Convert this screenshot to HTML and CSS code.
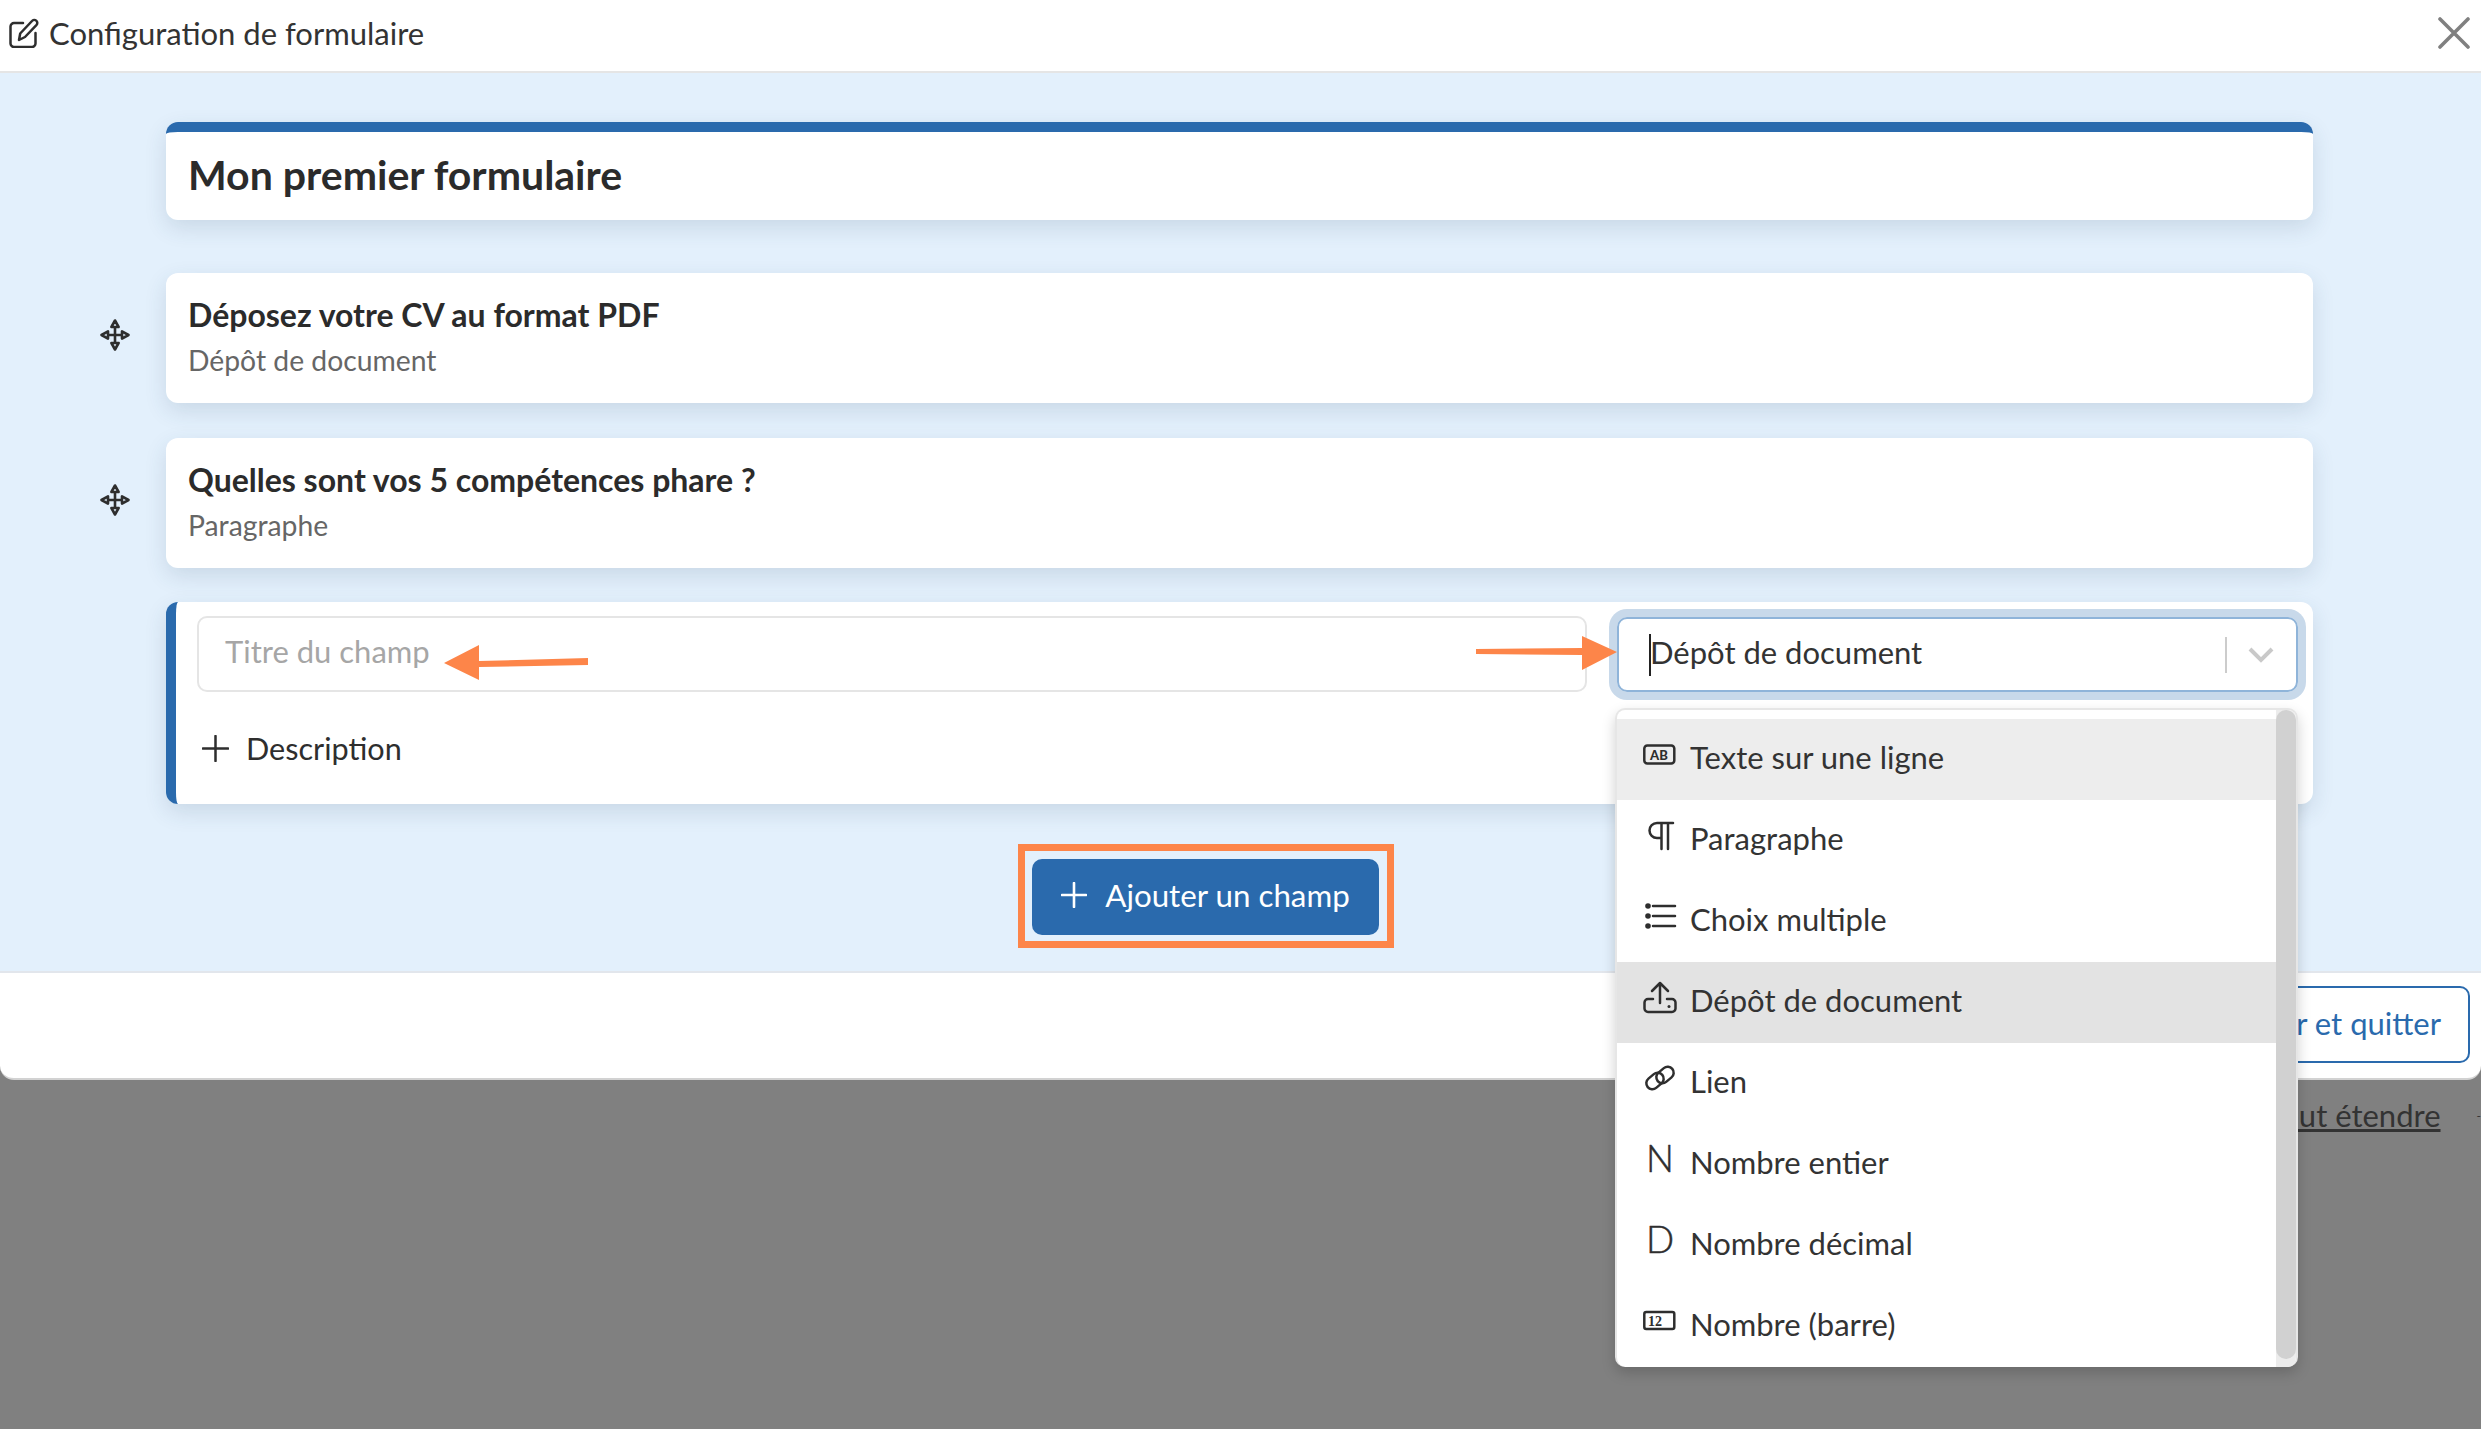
FILE: index.html
```html
<!DOCTYPE html>
<html lang="fr">
<head>
<meta charset="utf-8">
<title>Configuration de formulaire</title>
<link rel="stylesheet" href="styles.css">
</head>
<body>
<div class="modal">
  <header class="modal-head">
    <div class="head-title">
      <svg class="edit-icon" viewBox="0 0 30 30"><path d="M14 5H5a3.5 3.5 0 0 0-3.5 3.5v17A3.5 3.5 0 0 0 5 29h18a3.5 3.5 0 0 0 3.5-3.5V15"/><path d="M10 22l1.2-6.5L23 3a2.9 2.9 0 0 1 4.6 3.8L16 19z"/></svg>
      <span>Configuration de formulaire</span>
    </div>
    <svg class="close-icon" viewBox="0 0 32 32"><path d="M2 2l28 28M30 2L2 30"/></svg>
  </header>
  <main class="modal-body">
    <div class="form">
      <section class="card title-card"><h1>Mon premier formulaire</h1></section>

      <div class="drag"><svg viewBox="0 0 30 32"><path d="M15 8v16M8 16h14M15 1.5l3.6 6.5h-7.2zM15 30.500l3.600-6.500h-7.200zM1.500 16L8 12.400v7.200zM28.500 16L22 12.400v7.200z"/></svg></div>
      <section class="card field-card first-field">
        <h2>Déposez votre CV au format PDF</h2>
        <p>Dépôt de document</p>
      </section>

      <div class="drag second"><svg viewBox="0 0 30 32"><path d="M15 8v16M8 16h14M15 1.5l3.6 6.5h-7.200zM15 30.500l3.600-6.500h-7.200zM1.500 16L8 12.400v7.200zM28.500 16L22 12.400v7.200z"/></svg></div>
      <section class="card field-card second-field">
        <h2>Quelles sont vos 5 compétences phare ?</h2>
        <p>Paragraphe</p>
      </section>

      <section class="card editor">
        <div class="editor-row">
          <div class="title-input">Titre du champ</div>
          <div class="select">
            <span class="caret"></span>
            <span class="select-value">Dépôt de document</span>
            <span class="select-sep"></span>
            <svg class="chevron" viewBox="0 0 26 16"><path d="M2 2l11 11L24 2"/></svg>
            <div class="dropdown">
              <ul class="options">
                <li class="option hover">
                  <svg class="opt-icon" viewBox="0 0 34 34"><rect x="2.300" y="5.500" width="30" height="18" rx="3"/><text class="t-ab" x="17" y="19.500">AB</text></svg>
                  <span>Texte sur une ligne</span>
                </li>
                <li class="option">
                  <svg class="opt-icon" viewBox="0 0 34 34"><path d="M31 2H15a7.500 7.500 0 0 0 0 15h4M19.500 2v26M26 2v26"/></svg>
                  <span>Paragraphe</span>
                </li>
                <li class="option">
                  <svg class="opt-icon" viewBox="0 0 34 34"><path d="M11 4h22M11 14h22M11 24h22"/><circle class="dot" cx="6" cy="4" r="2.800"/><circle class="dot" cx="6" cy="14" r="2.800"/><circle class="dot" cx="6" cy="24" r="2.800"/></svg>
                  <span>Choix multiple</span>
                </li>
                <li class="option selected">
                  <svg class="opt-icon" viewBox="0 0 34 34"><path d="M18 0v20M10 8l8-8 8 8"/><path d="M11 16H6a3.500 3.500 0 0 0-3.500 3.500v6A3.500 3.500 0 0 0 6 29h24a3.500 3.500 0 0 0 3.500-3.500v-6A3.500 3.500 0 0 0 30 16h-5"/><circle class="dot" cx="27" cy="23.500" r="1.500"/></svg>
                  <span>Dépôt de document</span>
                </li>
                <li class="option">
                  <svg class="opt-icon" viewBox="0 0 34 34"><rect x="3.500" y="11" width="19" height="12" rx="6" transform="rotate(-40 13 17)"/><rect x="13.500" y="5" width="19" height="12" rx="6" transform="rotate(-40 23 11)"/></svg>
                  <span>Lien</span>
                </li>
                <li class="option">
                  <svg class="opt-icon" viewBox="0 0 34 34"><text class="t-letter" x="4" y="27">N</text></svg>
                  <span>Nombre entier</span>
                </li>
                <li class="option">
                  <svg class="opt-icon" viewBox="0 0 34 34"><text class="t-letter" x="4" y="27">D</text></svg>
                  <span>Nombre décimal</span>
                </li>
                <li class="option">
                  <svg class="opt-icon" viewBox="0 0 34 34"><rect x="2.300" y="5" width="30" height="17" rx="2"/><text class="t-num" x="13" y="18.500">12</text></svg>
                  <span>Nombre (barre)</span>
                </li>
              </ul>
              <div class="scroll-track"><div class="scroll-thumb"></div></div>
            </div>
          </div>
        </div>
        <div class="add-desc">
          <svg class="plus" viewBox="0 0 28 28"><path d="M14 1v26M1 14h26"/></svg>
          <span>Description</span>
        </div>
      </section>

      <div class="add-row">
        <div class="frame">
          <button class="add-btn">
            <svg class="plus-white" viewBox="0 0 26 26"><path d="M13 1v24M1 13h24"/></svg>
            <span>Ajouter un champ</span>
          </button>
        </div>
      </div>
    </div>
  </main>
  <footer class="modal-foot">
    <button class="save-btn">Enregistrer et quitter</button>
  </footer>
</div>
<div class="below">
  <a class="expand">Tout étendre</a>
  <span class="sep">-</span>
</div>
<svg class="annotations" viewBox="0 0 2481 1429">
  <polygon points="444,663 479,645 479,661 588,658 588,665 479,667 479,680"/>
  <polygon points="1617,652 1582,636 1582,648 1476,649 1476,654 1582,655 1582,670"/>
</svg>
</body>
</html>
```
FILE: styles.css
```css
* { box-sizing: border-box; }
html, body { margin: 0; height: 100%; }
body {
  position: relative;
  background: #808080;
  overflow: hidden;
  font-family: Lato, "Noto Sans", sans-serif;
  font-size: 31px;
  color: #2e2e2e;
}
.modal {
  background: #fff;
  border-radius: 0 0 14px 14px;
  border-bottom: 2px solid #d2d2d2;
}
.modal-head {
  height: 73px;
  padding: 0 11px 6px 9px;
  display: flex;
  align-items: center;
  justify-content: space-between;
  border-bottom: 2px solid #e5e5e5;
}
.head-title { display: flex; align-items: center; gap: 10px; font-size: 31px; color: #333; }
.edit-icon { width: 30px; height: 30px; fill: none; stroke: #2e2e2e; stroke-width: 2.5; stroke-linejoin: round; stroke-linecap: round; }
.close-icon { width: 32px; height: 32px; fill: none; stroke: #808080; stroke-width: 3.6; stroke-linecap: round; }
.modal-body {
  height: 900px;
  background: #e3f0fc;
  padding-top: 49px;
  border-bottom: 2px solid #e2e6ec;
}
.form {
  display: grid;
  grid-template-columns: 166px 1fr;
  padding-right: 168px;
}
.card {
  grid-column: 2;
  background: #fff;
  border-radius: 12px;
  box-shadow: 0 8px 22px rgba(40, 70, 100, 0.14);
}
.title-card {
  height: 98px;
  border-top: 10px solid #2a6aad;
  padding: 0 22px 4px;
  display: flex;
  align-items: center;
}
.title-card h1 { margin: 0; font-size: 41px; font-weight: 700; color: #2b2b2b; }
.drag { grid-column: 1; display: flex; justify-content: flex-start; align-items: center; padding: 53px 0 6px 100px; }
.drag.second { padding-top: 35px; }
.drag svg { width: 30px; height: 32px; fill: none; stroke: #2e2e2e; stroke-width: 2.6; stroke-linejoin: round; }
.field-card { height: 130px; padding: 22px 22px 0; }
.first-field { margin-top: 53px; }
.second-field { margin-top: 35px; }
.field-card h2 { margin: 0; font-size: 32px; line-height: 40px; font-weight: 700; color: #2b2b2b; }
.field-card p { margin: 5px 0 0; font-size: 28.300px; line-height: 40px; color: #666; }
.editor {
  grid-column: 2;
  margin-top: 34px;
  height: 202px;
  border-left: 10px solid #2a6aad;
  padding: 15px 15px 0 21px;
}
.editor-row { display: flex; gap: 30px; }
.title-input {
  width: 1390px;
  height: 76px;
  margin-top: -1px;
  border: 2px solid #e5e5e5;
  border-radius: 10px;
  padding: 0 26px 6px;
  display: flex;
  align-items: center;
  color: #a6a6a6;
}
.select {
  position: relative;
  flex: 1;
  height: 75px;
  border: 2px solid #8fb4d9;
  border-radius: 10px;
  box-shadow: 0 0 0 8px #c8d9ea;
  padding: 0 22px 0 30px;
  display: flex;
  align-items: center;
}
.caret { width: 2px; height: 42px; background: #222; flex: none; margin-right: -1px; }
.select-value { flex: 1; color: #333; padding-bottom: 6px; }
.select-sep { width: 2px; height: 36px; background: #ccc; margin-right: 21px; }
.chevron { width: 26px; height: 16px; fill: none; stroke: #c9c9c9; stroke-width: 4; }
.dropdown {
  position: absolute;
  z-index: 10;
  left: -4px;
  right: -2px;
  top: 89px;
  height: 659px;
  display: flex;
  background: #fff;
  border: 2px solid #e6e6e6;
  border-bottom: 0;
  border-radius: 10px;
  box-shadow: 0 6px 14px rgba(0, 0, 0, 0.18);
  overflow: hidden;
}
.options { flex: 1; list-style: none; margin: 0; padding: 9px 0 0; }
.option { height: 81px; padding: 0 0 5px 25px; display: flex; align-items: center; gap: 14px; color: #333; }
.option.hover { background: #ededed; }
.option.selected { background: #e3e3e3; }
.opt-icon { width: 34px; height: 34px; flex: none; overflow: visible; fill: none; stroke: #2e2e2e; stroke-width: 2.500; stroke-linecap: round; stroke-linejoin: round; }
.opt-icon .dot { fill: #2e2e2e; stroke: none; }
.opt-icon text { fill: #2e2e2e; stroke: none; }
.t-ab { font-size: 13px; font-weight: 900; text-anchor: middle; }
.opt-icon .t-letter { font-size: 37px; font-weight: 300; stroke: #2e2e2e; stroke-width: 0.500; }
.t-num { font-family: "Liberation Serif", serif; font-size: 14px; font-weight: 700; text-anchor: middle; }
.scroll-track { width: 20px; background: #ececec; }
.scroll-thumb { height: 649px; background: #d1d1d1; border-radius: 10px; }
.add-desc { margin: 38px 0 0 5px; display: flex; align-items: center; gap: 17px; font-size: 30.600px; }
.plus { width: 27px; height: 27px; fill: none; stroke: #2e2e2e; stroke-width: 2.600; stroke-linecap: round; }
.add-row { grid-column: 2; margin-top: 40px; padding-left: 852px; }
.frame { width: 376px; height: 104px; border: 7px solid #fd8549; padding: 8px 7px; }
.add-btn {
  width: 347px;
  height: 76px;
  padding: 0 0 4px;
  border: 0;
  border-radius: 10px;
  background: #2a6aad;
  color: #fff;
  font: inherit;
  display: flex;
  align-items: center;
  justify-content: center;
  gap: 18px;
}
.add-btn span { font-size: 31.300px; }
.plus-white { width: 26px; height: 26px; fill: none; stroke: #fff; stroke-width: 2.600; stroke-linecap: round; }
.modal-foot { height: 105px; padding: 13px 11px 0 0; display: flex; justify-content: flex-end; align-items: flex-start; }
.save-btn {
  height: 77px;
  padding: 0 27px 4px;
  border: 2px solid #2a6aad;
  border-radius: 10px;
  background: #fff;
  color: #2a6aad;
  font: inherit;
}
.below { display: flex; justify-content: flex-end; gap: 36px; padding: 16px 0 0; }
.expand { color: #333; text-decoration: underline; }
.sep { color: #333; font-size: 12px; align-self: center; }
.annotations { position: absolute; z-index: 20; left: 0; top: 0; width: 2481px; height: 1429px; pointer-events: none; fill: #fd8549; }
```
